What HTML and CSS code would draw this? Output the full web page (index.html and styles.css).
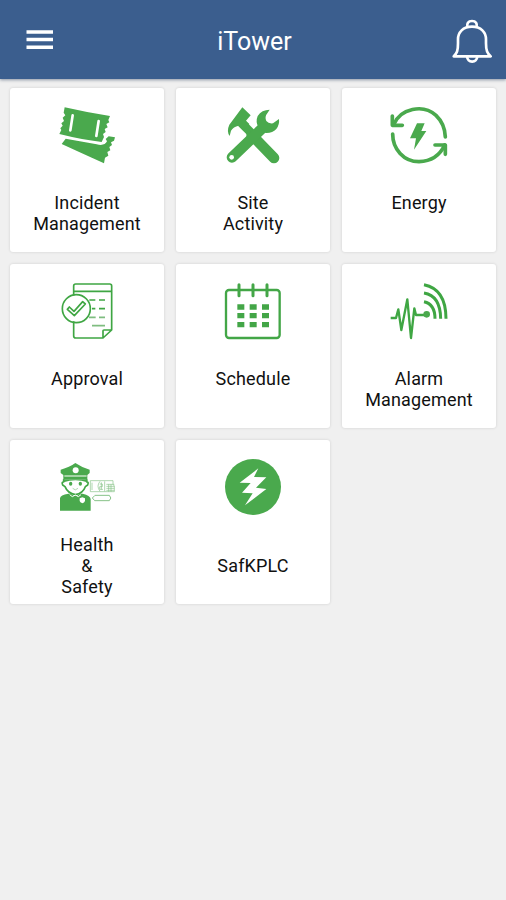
FILE: index.html
```
<!DOCTYPE html>
<html lang="en">
  <head>
    <meta charset="UTF-8" />
    <meta name="viewport" content="width=device-width, initial-scale=1.0" />
    <title>iTower</title>
    <link rel="stylesheet" href="styles.css">
  </head>
  <body>
    <header class="header">
      <svg class="menu" viewBox="0 0 28 22">
        <path d="M.5 3h26.500M.5 10.500h26.500M.5 18.200h26.500" />
      </svg>
      <h1 class="title">iTower</h1>
      <svg class="bell" viewBox="0 0 120 138">
        <path d="M5 115C15 105 18 99 18 76V64C18 43 33 26 60 26S102 43 102 64V76C102 99 106 105 116 115Z" />
        <path d="M46 27C44 17 48 9 60 9S76 17 74 27M45 116C48 136 73 136 76 116" />
      </svg>
    </header>
    <main class="grid">
      <div class="card">
        <svg class="icon" viewBox="171 75 180 180">
          <path class="fill" d="M194 82Q263 98 330 108L325 120 328 127 319 132 323 142 314 147 317 156 309 162 312 171 305 186Q245 179 178 162L184 150 181 145 188 137 184 130 192 123 188 113 196 106 191 98Z" />
          <path class="fill" d="M197 176L290 193Q314 199 321 184L317 177 326 169 345 172 342 182 333 187 336 195 328 201 331 211 322 216 325 227 315 233 312 250Q246 220 185 192Z" />
          <path class="cut" d="M218 106L211 151M296 123L289 168" />
        </svg>
        <p class="label">Incident<br />Management</p>
      </div>
      <div class="card">
        <svg class="icon" viewBox="159 75 180 180">
          <path class="shaft" d="M213 128L250 165" />
          <path class="thick" d="M245 165L312 234" />
          <path class="thick" d="M281 141L186 232" />
          <path class="fill" d="M217 82L242 106 228 122 238 132 220 151 206 137Q190 140 183 152L179 168Q169 154 178 134Z" />
          <path class="fill" d="M299 89Q275 89 263 108 256 125 265 142L287 159Q307 160 319 147 329 134 327 117L309 130Q296 132 289 123 283 111 292 100Z" />
          <circle class="hole" cx="185" cy="232" r="7" />
        </svg>
        <p class="label">Site<br />Activity</p>
      </div>
      <div class="card">
        <svg class="icon" viewBox="159 75 180 180">
          <path class="arc" d="M173 134C193 85 261 71 300 106Q327 132 328 171M170 162C170 207 203 245 249 245Q304 243 326 195" />
          <path class="arc" d="M169 108V136H199M297 195H328V223" />
          <path class="fill" d="M243 130H266L256 153H271L234 209 240 175H222Z" />
        </svg>
        <p class="label">Energy</p>
      </div>
      <div class="card">
        <svg class="icon" viewBox="171 75 180 180">
          <path class="line" d="M221 119V90Q221 84 227 84H329Q335 84 335 90V222L309 246H227Q221 246 221 240V196M221 106H335M309 246V224Q309 222 312 222H335" />
          <circle class="line" cx="229" cy="158" r="42" />
          <path class="line" d="M208 153L222 166 248 137 256 144 223 179 202 160Z" />
          <path class="line" d="M268 132H286M297 132H315M276 158H286M297 158H315" />
          <path class="line pale" d="M267 184H287M297 184H315M276 209H315" />
        </svg>
        <p class="label">Approval</p>
      </div>
      <div class="card">
        <svg class="icon" viewBox="159 75 180 180">
          <rect class="frame" x="168" y="102" width="161" height="144" rx="9" />
          <path class="ring" d="M207 86V119M249 86V119M291 86V119" />
          <path class="dots" d="M202 153H297M202 179H297M202 206H297" />
        </svg>
        <p class="label">Schedule</p>
      </div>
      <div class="card">
        <svg class="icon" viewBox="159 75 180 180">
          <path class="pulse" d="M164 186H180L187 160 196 222 214 130 225 246 235 157 240 177H272" />
          <circle class="fill" cx="272" cy="175" r="10" />
          <path class="wave" d="M264 137Q297 144 297 188M264 111Q313 119 314 188M264 86Q330 99 330 188" />
        </svg>
        <p class="label">Alarm<br />Management</p>
      </div>
      <div class="card">
        <svg class="icon" viewBox="171 75 180 180">
          <path class="fill" d="M182 113Q209 105 226 93 245 106 269 113V123L262 129V143H190V129L182 123Z" />
          <path class="line" d="M191 142V150Q184 149 188 159L195 164Q203 184 226 188 249 184 256 164L263 159Q267 149 260 150V142" />
          <path class="fill" d="M190 143H262V151Q226 139 191 151ZM180 236V199Q181 188 205 185L213 185Q226 199 240 185L248 185Q271 190 272 201V236Z" />
          <circle class="hole" cx="227" cy="115" r="9" />
          <path class="hole" d="M239 199L247 196 255 199V207Q253 212 247 214 240 211 239 207Z" />
          <path class="collar" d="M209 188L217 194 226 189 235 194 243 188M193 132H260" />
          <ellipse class="fill" cx="212" cy="155" rx="5" ry="6" />
          <ellipse class="fill" cx="241" cy="155" rx="5" ry="6" />
          <path class="thin" d="M218 169Q226 178 234 169M271 146H339V157L343 162V179H271Z" />
          <path class="thin" d="M276 152V174M300 148Q288 162 300 178M304 151V173M299 156H307V164H299V172H309M314 148V178M319 157H343M319 163H343M319 169H343M319 175H343M326 157V179M333 157V179" />
          <path class="thin wide" d="M284 191L277 198 284 206H328Q337 198 328 190H284" />
        </svg>
        <p class="label raised">Health<br />&amp;<br />Safety</p>
      </div>
      <div class="card">
        <svg class="icon" viewBox="159 75 180 180">
          <circle class="fill" cx="249" cy="165" r="84" />
          <path class="hole" d="M265 109L209 152 242 153 216 182 248 184 225 220 289 171 258 167 289 136 252 135Z" />
        </svg>
        <p class="label lowered">SafKPLC</p>
      </div>
    </main>
  </body>
</html>
```
FILE: styles.css
```
* {
  box-sizing: border-box;
}
body {
  margin: 0;
  min-height: 100vh;
  background: #f0f0f0;
  font-family: Roboto, "Liberation Sans", sans-serif;
}
svg {
  display: block;
  fill: none;
}
.header {
  display: flex;
  justify-content: space-between;
  align-items: center;
  height: 79px;
  padding: 2px 14px 0 26px;
  background: #3b5e8e;
  box-shadow: 0 1px 3px rgba(40, 60, 90, 0.5);
}
.menu {
  width: 28px;
  height: 22px;
  margin-top: -2px;
  stroke: #fff;
  stroke-width: 3.6;
}
.title {
  margin: 2px 0 0 3px;
  color: #fff;
  font-size: 25px;
  font-weight: 400;
  line-height: 30px;
}
.bell {
  width: 40px;
  height: 46px;
  stroke: #fff;
  stroke-width: 8;
  stroke-linejoin: round;
}
.grid {
  display: grid;
  grid-template-columns: repeat(3, 154px);
  grid-auto-rows: 164px;
  gap: 12px;
  padding: 9px 10px;
}
.card {
  display: flex;
  flex-direction: column;
  align-items: center;
  padding-top: 17px;
  background: #fff;
  border-radius: 3px;
  box-shadow: 0 0 3px rgba(0, 0, 0, 0.14);
}
.icon {
  width: 60px;
  height: 60px;
  stroke-linejoin: round;
}
.label {
  margin: 27px 0 0;
  color: #111;
  font-size: 18px;
  line-height: 21px;
  letter-spacing: 0.15px;
  text-align: center;
}
.raised {
  margin-top: 17px;
}
.lowered {
  margin-top: 38px;
}

/* icon parts */
.fill {
  fill: #4aa94d;
}
.hole {
  fill: #fff;
}
.cut {
  stroke: #fff;
  stroke-width: 8;
  stroke-linecap: round;
}
.shaft {
  stroke: #4aa94d;
  stroke-width: 26;
}
.thick {
  stroke: #4aa94d;
  stroke-width: 32;
  stroke-linecap: round;
}
.arc {
  stroke: #4aa94d;
  stroke-width: 11;
  stroke-linecap: round;
}
.line {
  stroke: #3fa643;
  stroke-width: 5;
}
.pale {
  stroke: #7fbd80;
}
.frame {
  stroke: #43a647;
  stroke-width: 7;
}
.ring {
  stroke: #43a647;
  stroke-width: 9;
  stroke-linecap: round;
}
.dots {
  stroke: #43a647;
  stroke-width: 16;
  stroke-dasharray: 21 16;
}
.pulse {
  stroke: #3fa643;
  stroke-width: 7;
}
.wave {
  stroke: #3fa643;
  stroke-width: 9;
}
.collar {
  stroke: #fff;
  stroke-width: 3;
}
.thin {
  stroke: #86c288;
  stroke-width: 2;
}
.wide {
  stroke-width: 3;
}
```
